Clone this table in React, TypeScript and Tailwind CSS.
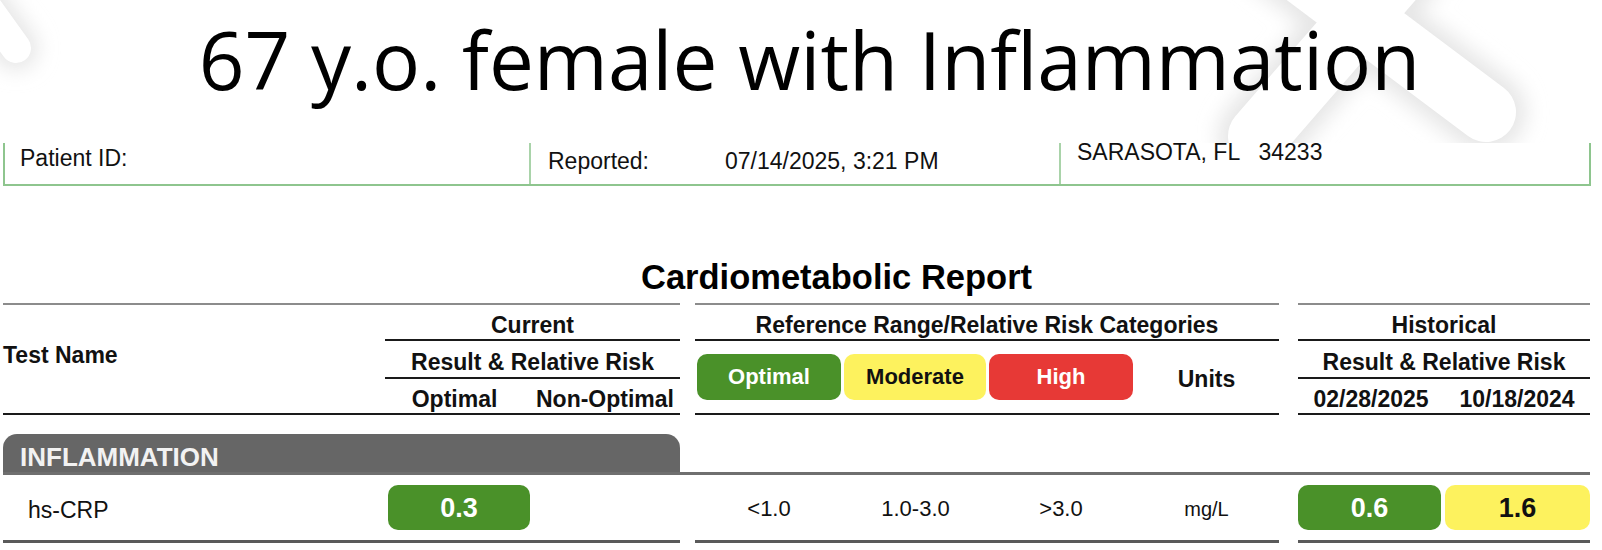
import React from "react";

const GRID =
  "grid grid-cols-[382px_145px_150px_15px_148px_145px_146px_145px_19px_146px_146px]";

function Decorations() {
  return (
    <svg
      className="absolute left-0 top-0 pointer-events-none"
      width="1602"
      height="143"
      viewBox="0 0 1602 143"
    >
      <defs>
        <filter id="soft" x="-50%" y="-50%" width="200%" height="200%">
          <feGaussianBlur stdDeviation="10" />
        </filter>
      </defs>
      <g filter="url(#soft)" stroke="#e6e6e6" strokeLinecap="round" fill="none">
        <line x1="-40" y1="-30" x2="16" y2="48" strokeWidth="44" />
        <line x1="1258" y1="136" x2="1480" y2="-120" strokeWidth="80" />
        <line x1="1230" y1="-80" x2="1486" y2="112" strokeWidth="80" />
      </g>
      <g stroke="#ffffff" strokeLinecap="round" fill="none">
        <line x1="-40" y1="-30" x2="16" y2="48" strokeWidth="30" />
        <line x1="1258" y1="136" x2="1480" y2="-120" strokeWidth="60" />
        <line x1="1230" y1="-80" x2="1486" y2="112" strokeWidth="60" />
      </g>
    </svg>
  );
}

function Pill({
  color,
  text,
  dark,
  className,
  size,
}: {
  color: string;
  text: string;
  dark?: boolean;
  className: string;
  size: string;
}) {
  return (
    <div
      className={`${className} ${color} ${size} flex items-center justify-center rounded-[10px] font-bold ${
        dark ? "text-[#111]" : "text-white"
      }`}
    >
      {text}
    </div>
  );
}

export default function App() {
  return (
    <div className="relative w-[1602px] h-[550px] bg-white overflow-hidden">
      <header className="relative h-[143px] flex justify-center pt-[19px] pl-[17px]">
        <Decorations />
        <h1 className="relative font-['Open_Sans',sans-serif] text-[80px] leading-[80px] font-normal text-black whitespace-nowrap">
          67 y.o. female with Inflammation
        </h1>
      </header>

      <div className="font-['Liberation_Sans',Arial,sans-serif] text-[#111]">
        {/* patient info box (top clipped) */}
        <div className="ml-[3px] w-[1588px] h-[43px] flex overflow-hidden border-x-2 border-b-2 border-[#8ec58e] text-[23px] leading-[26px]">
          <div className="w-[526px] border-r-2 border-[#a9d3a9] pl-[15px] pt-[2px]">
            Patient ID:
          </div>
          <div className="w-[530px] border-r-2 border-[#a9d3a9] pl-[17px] pt-[5px] flex">
            <span className="w-[177px]">Reported:</span>
            <span>07/14/2025, 3:21 PM</span>
          </div>
          <div className="flex-1 pl-[16px] -mt-[4px] whitespace-pre">
            SARASOTA, FL   34233
          </div>
        </div>

        {/* report title */}
        <div className="mt-[75px] mb-[9px] pl-[641px] h-[33px] text-[34.5px] leading-[33px] font-bold text-black whitespace-nowrap">
          Cardiometabolic Report
        </div>

        {/* table header */}
        <div
          className={`${GRID} ml-[3px] grid-rows-[38px_38px_36px] text-[23px] leading-[26px] font-bold`}
        >
          <div className="col-start-1 col-span-1 row-start-1 row-span-3 border-t-2 border-b-2 border-t-[#8c8c8c] border-b-[#1a1a1a] flex items-center pb-[8px]">
            Test Name
          </div>
          <div className="col-start-2 col-span-2 row-start-1 border-t-2 border-b-2 border-t-[#8c8c8c] border-b-[#1a1a1a] flex items-center justify-center pt-[5px]">
            Current
          </div>
          <div className="col-start-5 col-span-4 row-start-1 border-t-2 border-b-2 border-t-[#8c8c8c] border-b-[#1a1a1a] flex items-center justify-center pt-[5px]">
            Reference Range/Relative Risk Categories
          </div>
          <div className="col-start-10 col-span-2 row-start-1 border-t-2 border-b-2 border-t-[#8c8c8c] border-b-[#1a1a1a] flex items-center justify-center pt-[5px]">
            Historical
          </div>

          <div className="col-start-2 col-span-2 row-start-2 border-b-2 border-[#1a1a1a] flex items-center justify-center pt-[6px]">
            Result &amp; Relative Risk
          </div>
          <div className="col-start-10 col-span-2 row-start-2 border-b-2 border-[#1a1a1a] flex items-center justify-center pt-[6px]">
            Result &amp; Relative Risk
          </div>

          <div className="col-start-5 row-start-2 row-span-2 border-b-2 border-[#1a1a1a] flex items-center text-[22px]">
            <Pill
              className="ml-[2px]"
              size="w-[144px] h-[46px]"
              color="bg-[#4a9129]"
              text="Optimal"
            />
          </div>
          <div className="col-start-6 row-start-2 row-span-2 border-b-2 border-[#1a1a1a] flex items-center text-[22px]">
            <Pill
              className="ml-[1px]"
              size="w-[142px] h-[46px]"
              color="bg-[#fdf25e]"
              text="Moderate"
              dark
            />
          </div>
          <div className="col-start-7 row-start-2 row-span-2 border-b-2 border-[#1a1a1a] flex items-center text-[22px]">
            <Pill
              className="ml-[1px]"
              size="w-[144px] h-[46px]"
              color="bg-[#e73936]"
              text="High"
            />
          </div>
          <div className="col-start-8 row-start-2 row-span-2 border-b-2 border-[#1a1a1a] flex items-center justify-center pt-[3px]">
            Units
          </div>

          <div className="col-start-2 row-start-3 border-b-2 border-[#1a1a1a] flex items-center justify-center pt-[5px] pr-[6px]">
            Optimal
          </div>
          <div className="col-start-3 row-start-3 border-b-2 border-[#1a1a1a] flex items-center justify-center pt-[5px]">
            Non-Optimal
          </div>
          <div className="col-start-10 row-start-3 border-b-2 border-[#1a1a1a] flex items-center justify-center pt-[5px]">
            02/28/2025
          </div>
          <div className="col-start-11 row-start-3 border-b-2 border-[#1a1a1a] flex items-center justify-center pt-[5px]">
            10/18/2024
          </div>
        </div>

        {/* section header */}
        <div className={`${GRID} ml-[3px] mt-[19px] h-[41px]`}>
          <div className="col-start-1 col-span-3 bg-[#666666] rounded-t-[14px] border-b-[3px] border-[#6f6f6f] pl-[17px] pt-[9px] text-[26px] leading-[28px] font-bold text-[#f2f2f2]">
            INFLAMMATION
          </div>
          <div className="col-start-4 col-span-8 border-b-[3px] border-[#6f6f6f]" />
        </div>

        {/* data row */}
        <div className={`${GRID} ml-[3px] h-[68px] text-[22px] leading-[26px]`}>
          <div className="col-start-1 col-span-3 border-b-[3px] border-[#5a5a5a] flex items-center">
            <div className="w-[382px] pl-[25px] pt-[5px] text-[23px]">hs-CRP</div>
            <Pill
              className="ml-[3px] text-[27px]"
              size="w-[142px] h-[45px]"
              color="bg-[#4a9129]"
              text="0.3"
            />
          </div>
          <div className="col-start-5 col-span-4 border-b-[3px] border-[#5a5a5a] grid grid-cols-[148px_145px_146px_145px] items-center pt-[3px]">
            <div className="text-center">&lt;1.0</div>
            <div className="text-center">1.0-3.0</div>
            <div className="text-center">&gt;3.0</div>
            <div className="text-center text-[20px]">mg/L</div>
          </div>
          <div className="col-start-10 col-span-2 border-b-[3px] border-[#5a5a5a] flex items-center">
            <Pill
              className="text-[27px]"
              size="w-[143px] h-[45px]"
              color="bg-[#4a9129]"
              text="0.6"
            />
            <Pill
              className="ml-[4px] text-[27px]"
              size="w-[145px] h-[45px]"
              color="bg-[#fdf25e]"
              text="1.6"
              dark
            />
          </div>
        </div>
      </div>
    </div>
  );
}
